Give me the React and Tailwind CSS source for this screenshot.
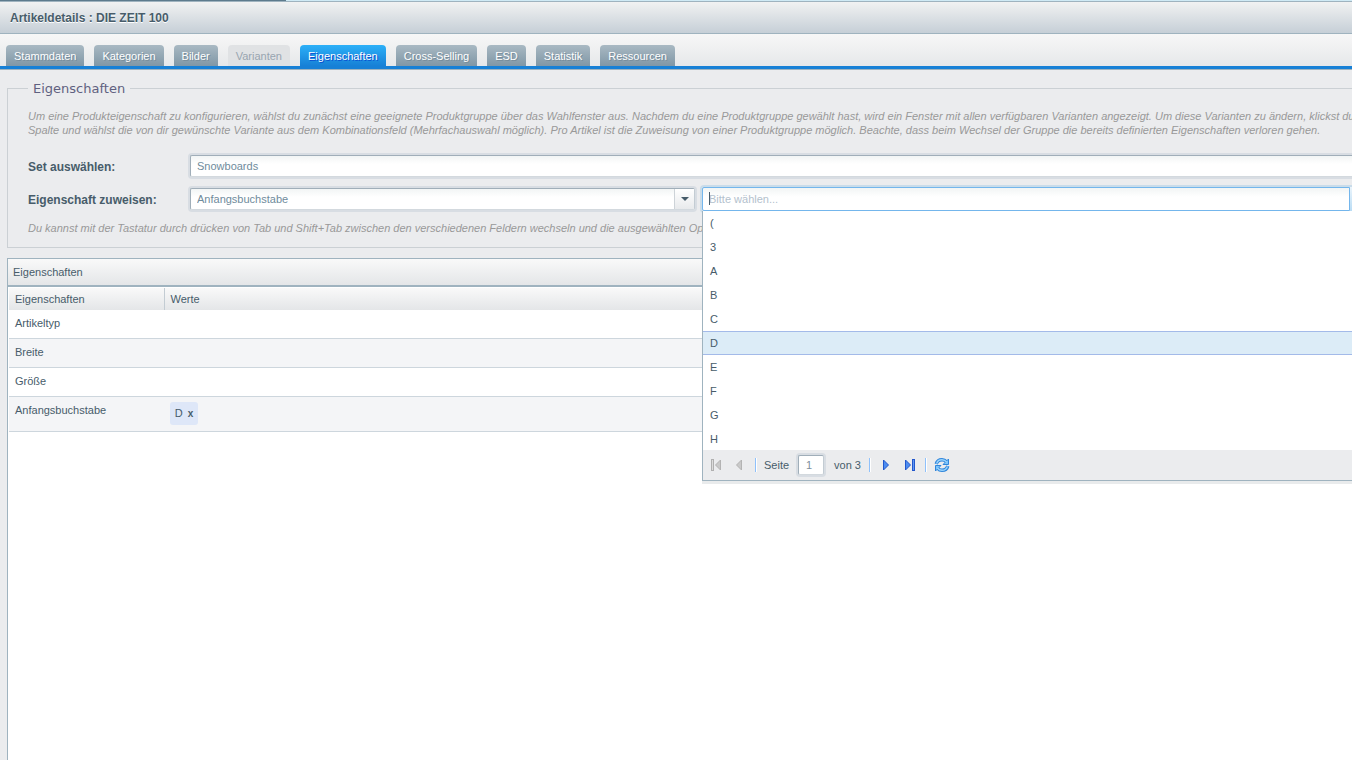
const tabs = [
  { label: 'Stammdaten' },
  { label: 'Kategorien' },
  { label: 'Bilder' },
  { label: 'Varianten', disabled: true },
  { label: 'Eigenschaften', active: true },
  { label: 'Cross-Selling' },
  { label: 'ESD' },
  { label: 'Statistik' },
  { label: 'Ressourcen' },
];

const options = ['(', '3', 'A', 'B', 'C', 'D', 'E', 'F', 'G', 'H'];

const rows = [
  { name: 'Artikeltyp', values: [] },
  { name: 'Breite', values: [] },
  { name: 'Größe', values: [] },
  { name: 'Anfangsbuchstabe', values: ['D'] },
];

const fieldBox =
  'h-[22px] rounded-[2px] border border-t-[#a0aeb9] border-l-[#a0aeb9] border-r-[#c3ccd3] border-b-[#d3d9de] bg-linear-to-b from-[#f2f5f5] to-white to-40% ring-2 ring-[#d8dde3]';

const fieldLabel = 'w-[162px] shrink-0 pt-[2px] text-[12px] leading-4 font-bold';

function Tab({ label, active, disabled }) {
  const look = active
    ? 'bg-linear-to-b from-[#2cb0f8] to-[#1780d6] text-white [text-shadow:1px_1px_0_#0a4fd0]'
    : disabled
      ? 'bg-[#e0e2e4] text-[#98a5b0]'
      : 'bg-linear-to-b from-[#a9b9c3] to-[#8097a6] text-white [text-shadow:1px_1px_0_#768c9b]';
  return (
    <button
      type="button"
      role="tab"
      aria-selected={!!active}
      disabled={disabled}
      className={`h-[21px] rounded-t-[4px] px-2 leading-[22px] ${look}`}
    >
      {label}
    </button>
  );
}

function Tabs() {
  return (
    <nav className="border-b border-b-[#9fb3bf]">
      <div
        role="tablist"
        className="flex h-[35px] items-end gap-[10px] border-b-3 border-b-[#1780d6] bg-linear-to-b from-[#f7f7f7] to-[#e6e8ea] pl-[6px]"
      >
        {tabs.map((t) => (
          <Tab key={t.label} {...t} />
        ))}
      </div>
    </nav>
  );
}

function Separator() {
  return <span className="h-[14px] w-[2px] border-r border-r-white bg-[#8fc1fb]" />;
}

function FirstIcon() {
  return (
    <svg width="16" height="16" viewBox="0 0 16 16">
      <rect x="3.5" y="2.5" width="2" height="11" fill="#dcdcdc" stroke="#b0b0b0" />
      <path d="M12.5 3v10L7.500 8z" fill="#c9c9c9" stroke="#b3b3b3" />
    </svg>
  );
}

function PrevIcon() {
  return (
    <svg width="16" height="16" viewBox="0 0 16 16">
      <path d="M10.500 3v10L5.500 8z" fill="#c9c9c9" stroke="#b3b3b3" />
    </svg>
  );
}

function NextIcon() {
  return (
    <svg width="16" height="16" viewBox="0 0 16 16">
      <path d="M5.500 3v10L10.500 8z" fill="#4d8df0" stroke="#2257cc" />
    </svg>
  );
}

function LastIcon() {
  return (
    <svg width="16" height="16" viewBox="0 0 16 16">
      <path d="M3.500 3v10L8.500 8z" fill="#4d8df0" stroke="#2257cc" />
      <rect x="10.500" y="2.500" width="2" height="11" fill="#5f98f3" stroke="#2257cc" />
    </svg>
  );
}

function RefreshIcon() {
  return (
    <svg width="16" height="16" viewBox="0 0 16 16" fill="none">
      <g stroke="#2f86dc" strokeWidth="3.4">
        <path d="M2.200 7C3 3.800 5.500 2.700 8 2.700c1.900 0 3.300.8 4.300 2" />
        <path d="M13.800 9C13 12.200 10.500 13.300 8 13.300c-1.900 0-3.300-.8-4.300-2" />
      </g>
      <g fill="#7cc4fa" stroke="#2f86dc" strokeLinejoin="round">
        <path d="M14.500 2v5.500H9z" />
        <path d="M1.500 14V8.500H7z" />
      </g>
      <g stroke="#9ad4fc" strokeWidth="1.400">
        <path d="M2.600 6.600C3.300 3.900 5.500 2.700 8 2.700c1.900 0 3.500.9 4.600 2.300" />
        <path d="M13.400 9.400C12.700 12.100 10.500 13.300 8 13.300c-1.900 0-3.500-.9-4.600-2.300" />
      </g>
    </svg>
  );
}

function PageButton({ label, disabled, children }) {
  return (
    <button type="button" aria-label={label} disabled={disabled} className="size-4">
      {children}
    </button>
  );
}

function ValueDropdown() {
  return (
    <div className="absolute inset-x-0 top-full z-10 border-b border-l border-[#9fb3bf] bg-white shadow-[0_3px_0_#e9ebec]">
      <ul role="listbox" aria-label="Werte" className="h-[239px] overflow-hidden">
        {options.map((o) => (
          <li
            key={o}
            role="option"
            aria-selected={o === 'D'}
            className={`h-6 border-y px-[7px] leading-[23px] ${
              o === 'D' ? 'border-[#a3bae9] bg-[#dcecf7]' : 'border-transparent'
            }`}
          >
            {o}
          </li>
        ))}
      </ul>
      <div className="flex h-[30px] items-center bg-[#ebecee] pl-[5px]">
        <PageButton label="Erste Seite" disabled>
          <FirstIcon />
        </PageButton>
        <span className="w-[7px]" />
        <PageButton label="Vorherige Seite" disabled>
          <PrevIcon />
        </PageButton>
        <span className="w-2" />
        <Separator />
        <label htmlFor="page" className="mr-[9px] ml-[7px]">
          Seite
        </label>
        <input
          id="page"
          defaultValue="1"
          className="h-5 w-[26px] rounded-[2px] border border-t-[#a0aeb9] border-r-[#c3ccd3] border-b-[#d3d9de] border-l-[#a0aeb9] bg-white px-[7px] text-[#7d8f9c] ring-2 ring-[#d8dde3] outline-none"
        />
        <span className="mr-2 ml-[10px]">von 3</span>
        <Separator />
        <span className="w-[7px]" />
        <PageButton label="Nächste Seite">
          <NextIcon />
        </PageButton>
        <span className="w-2" />
        <PageButton label="Letzte Seite">
          <LastIcon />
        </PageButton>
        <span className="w-[7px]" />
        <Separator />
        <span className="w-[7px]" />
        <PageButton label="Aktualisieren">
          <RefreshIcon />
        </PageButton>
      </div>
    </div>
  );
}

function PropertyFieldset() {
  return (
    <fieldset className="ml-[7px] border border-r-0 border-[#cbd0d4] pb-3 pl-5">
      <legend className="px-[5px] font-['DejaVu_Sans',sans-serif] text-[13px] leading-[17px] text-[#5f6180]">
        Eigenschaften
      </legend>
      <p className="mt-3 leading-[14px] whitespace-nowrap text-[#999] italic">
        Um eine Produkteigenschaft zu konfigurieren, wählst du zunächst eine geeignete Produktgruppe über das
        Wahlfenster aus. Nachdem du eine Produktgruppe gewählt hast, wird ein Fenster mit allen verfügbaren Varianten
        angezeigt. Um diese Varianten zu ändern, klickst du
        <br />
        Spalte und wählst die von dir gewünschte Variante aus dem Kombinationsfeld (Mehrfachauswahl möglich). Pro
        Artikel ist die Zuweisung von einer Produktgruppe möglich. Beachte, dass beim Wechsel der Gruppe die bereits
        definierten Eigenschaften verloren gehen.
      </p>

      <div className="-mr-5 mt-[18px] flex items-center">
        <label htmlFor="set" className={fieldLabel}>
          Set auswählen:
        </label>
        <select
          id="set"
          className={`${fieldBox} min-w-0 flex-1 appearance-none px-[6px] text-[#6f8b9c] outline-none`}
        >
          <option>Snowboards</option>
        </select>
      </div>

      <div className="-mr-5 mt-[10px] flex h-6 items-center">
        <label htmlFor="property" className={fieldLabel}>
          Eigenschaft zuweisen:
        </label>
        <div className={`${fieldBox} mr-[7px] flex w-[505px] shrink-0`}>
          <select
            id="property"
            className="min-w-0 flex-1 appearance-none px-[6px] text-[#6f8b9c] outline-none"
          >
            <option>Anfangsbuchstabe</option>
          </select>
          <button
            type="button"
            aria-label="Eigenschaft öffnen"
            className="flex w-5 items-center justify-center border-l border-[#cdd3d8] bg-linear-to-b from-white to-[#e8eaec]"
          >
            <svg width="8" height="4" viewBox="0 0 8 4">
              <path d="M0 0h8L4 4z" fill="#475c6a" />
            </svg>
          </button>
        </div>
        <div className="relative flex h-6 min-w-0 flex-1">
          <input
            type="text"
            role="combobox"
            aria-expanded="true"
            aria-label="Wert"
            placeholder="Bitte wählen..."
            className="min-w-0 flex-1 rounded-l-[2px] border border-[#74b6ec] bg-linear-to-b from-[#f2f5f5] to-white to-40% px-[6px] ring-2 ring-[#c9dcea] outline-none placeholder:text-[#b3c1cd]"
          />
          <span className="absolute top-[5px] left-[7px] h-[13px] w-px bg-[#475c6a]" />
          <button
            type="button"
            aria-label="Wert öffnen"
            className="w-6 bg-linear-to-b from-[#eaf4fb] to-[#b9dcf4]"
          />
          <ValueDropdown />
        </div>
      </div>

      <p className="mt-[10px] leading-[14px] whitespace-nowrap text-[#999] italic">
        Du kannst mit der Tastatur durch drücken von Tab und Shift+Tab zwischen den verschiedenen Feldern wechseln und
        die ausgewählten Op
      </p>
    </fieldset>
  );
}

function PropertyGrid() {
  return (
    <section className="mt-[10px] ml-[7px] flex flex-1 flex-col border-t border-l border-[#9fb3bf] bg-white">
      <h2 className="h-7 border-b-2 border-[#9fb3bf] bg-linear-to-b from-[#f9f9f9] to-[#e4e6e8] pl-[5px] leading-[27px]">
        Eigenschaften
      </h2>
      <table className="mt-px ml-px table-fixed border-collapse text-left">
        <thead>
          <tr className="h-[22px] bg-linear-to-b from-[#f9f9f9] to-[#e4e6e8]">
            <th className="w-[155px] border-r border-r-[#c3ccd3] px-[6px] font-normal">Eigenschaften</th>
            <th className="px-[6px] font-normal">Werte</th>
          </tr>
        </thead>
        <tbody>
          {rows.map((r) => (
            <tr key={r.name} className="h-[29px] border-b border-[#cdd6dd] first:h-7 even:bg-[#f4f5f7]">
              <td className="px-[6px] pt-[5px] align-top leading-4">{r.name}</td>
              <td className="px-[6px] align-top">
                {r.values.map((v) => (
                  <span
                    key={v}
                    className="mt-[5px] mb-[6px] flex h-[23px] w-7 items-center justify-center gap-[5px] rounded-[3px] bg-[#dee7f8]"
                  >
                    {v}
                    <button type="button" aria-label={`${v} entfernen`} className="text-[10px] font-bold">
                      x
                    </button>
                  </span>
                ))}
              </td>
            </tr>
          ))}
        </tbody>
      </table>
    </section>
  );
}

export default function App() {
  return (
    <div className="flex min-h-screen flex-col overflow-hidden bg-[#ebecee] font-['Liberation_Sans',Arial,sans-serif] text-[11px] text-[#475c6a]">
      <div className="h-px bg-[#cfeaf5]">
        <div className="h-px w-[286px] bg-[#5d7b8d]" />
      </div>
      <header className="h-[33px] border-y border-[#9fb3bf] bg-linear-to-b from-[#f1f2f2] to-[#c6cfd7] pl-[10px]">
        <h1 className="text-[12px] leading-[33px] font-bold [text-shadow:0_1px_0_#fff]">
          Artikeldetails : DIE ZEIT 100
        </h1>
      </header>
      <Tabs />
      <main className="flex flex-1 flex-col pt-[10px]">
        <PropertyFieldset />
        <PropertyGrid />
      </main>
    </div>
  );
}
